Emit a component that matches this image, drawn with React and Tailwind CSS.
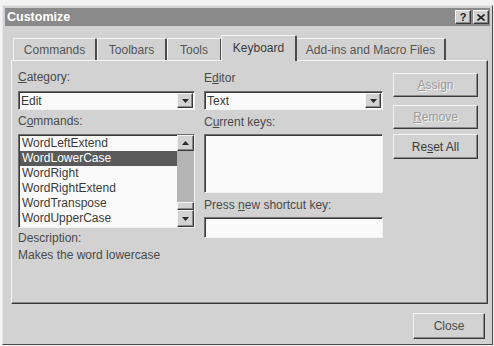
import React from 'react';

const font = "font-['Liberation_Sans',Arial,sans-serif]";

const sunken =
  'border border-t-[#6e6e6e] border-l-[#6e6e6e] border-r-[#f2f2f2] border-b-[#f2f2f2] shadow-[inset_1px_1px_0_#3a3a3a]';
const raised =
  'border border-t-[#f4f4f4] border-l-[#f4f4f4] border-r-[#3a3a3a] border-b-[#3a3a3a] shadow-[inset_-1px_-1px_0_#8a8a8a]';

const Arrow = ({ up }) => (
  <svg width="7" height="4" viewBox="0 0 7 4">
    <path d={up ? 'M0 4 L3.5 0 L7 4 Z' : 'M0 0 L7 0 L3.5 4 Z'} fill="#2a2a2a" />
  </svg>
);

const Combo = ({ value }) => (
  <div className={`h-[19px] bg-[#fafafa] flex items-center ${sunken}`}>
    <span className="flex-1 pl-[2px] text-[12px] leading-none text-[#3a3a3a]">{value}</span>
    <div className={`w-[16px] h-[15px] mr-[1px] bg-[#d2d2d2] flex items-center justify-center ${raised}`}>
      <Arrow />
    </div>
  </div>
);

const Label = ({ pre, u, post, className = '' }) => (
  <div className={`text-[12px] leading-[15px] text-[#4a4a4a] ${className}`}>
    {pre}
    <span className="underline">{u}</span>
    {post}
  </div>
);

const Button = ({ pre = '', u, post, disabled, className = '' }) => (
  <div
    className={`h-[24px] bg-[#d2d2d2] flex items-center justify-center text-[12px] ${raised} ${
      disabled ? 'text-[#9a9a9a] [text-shadow:1px_1px_0_#f4f4f4]' : 'text-[#3a3a3a]'
    } ${className}`}
  >
    {pre}
    <span className="underline">{u}</span>
    {post}
  </div>
);

const tabs = [
  { name: 'Commands', w: 'w-[84px]' },
  { name: 'Toolbars', w: 'w-[70px]' },
  { name: 'Tools', w: 'w-[55px]' },
  { name: 'Keyboard', w: 'w-[76px]', active: true },
  { name: 'Add-ins and Macro Files', w: 'w-[150px]' },
];

const commands = [
  'WordLeftExtend',
  'WordLowerCase',
  'WordRight',
  'WordRightExtend',
  'WordTranspose',
  'WordUpperCase',
];

export default function App() {
  return (
    <div className={`w-[494px] h-[346px] bg-[#f2f2f2] pt-[5px] pl-[2px] overflow-hidden ${font}`}>
      <div className="w-[491px] h-[340px] bg-[#d2d2d2] border border-t-[#e6e6e6] border-l-[#e6e6e6] border-r-[#4a4a4a] border-b-[#4a4a4a] px-[2px] pt-[2px] flex flex-col">
        {/* title bar */}
        <div className="h-[18px] bg-[#8a8a8a] flex items-center justify-between pl-[2px] pr-[1px]">
          <span className="text-[12.5px] font-bold text-white leading-none">Customize</span>
          <div className="flex gap-[2px]">
            <div className={`w-[16px] h-[14px] bg-[#d2d2d2] flex items-center justify-center text-[11px] font-bold text-[#222] leading-none ${raised}`}>
              ?
            </div>
            <div className={`w-[16px] h-[14px] bg-[#d2d2d2] flex items-center justify-center ${raised}`}>
              <svg width="8" height="7" viewBox="0 0 8 7">
                <path d="M0.5 0.5 L7.5 6.5 M7.5 0.5 L0.5 6.5" stroke="#222" strokeWidth="1.6" />
              </svg>
            </div>
          </div>
        </div>

        <div className="pl-[6px] pr-[2px]">
          {/* tabs */}
          <div className="h-[25px] mt-[9px] flex items-end pl-[2px]">
            {tabs.map((t) =>
              t.active ? (
                <div
                  key={t.name}
                  className={`${t.w} h-[26px] -mb-[1px] -mx-[1px] relative z-10 bg-[#d2d2d2] border-t border-l border-[#f4f4f4] border-r-2 border-r-[#4a4a4a] rounded-t-[2px] flex items-center justify-center pb-[2px] text-[12px] text-[#3a3a3a]`}
                >
                  {t.name}
                </div>
              ) : (
                <div
                  key={t.name}
                  className={`${t.w} h-[22px] bg-[#d2d2d2] border-t border-l border-[#f4f4f4] border-r-2 border-r-[#4a4a4a] rounded-t-[2px] flex items-center justify-center text-[12px] text-[#555]`}
                >
                  {t.name}
                </div>
              )
            )}
          </div>

          {/* panel */}
          <div className="w-[477px] h-[244px] border border-t-[#f4f4f4] border-l-[#f4f4f4] border-r-[#3a3a3a] border-b-[#3a3a3a] shadow-[inset_-1px_-1px_0_#8a8a8a] pl-[6px] flex gap-[9px]">
            {/* left column */}
            <div className="w-[177px] flex flex-col">
              <Label u="C" post="ategory:" className="mt-[9px]" />
              <div className="mt-[6px]">
                <Combo value="Edit" />
              </div>
              <Label pre="C" u="o" post="mmands:" className="mt-[4px]" />
              <div className={`mt-[5px] h-[94px] bg-[#fafafa] flex ${sunken}`}>
                <div className="flex-1 pt-[1px] pl-[1px]">
                  {commands.map((c) => (
                    <div
                      key={c}
                      className={`h-[15px] leading-[15px] pl-[2px] text-[12px] ${
                        c === 'WordLowerCase' ? 'bg-[#5a5a5a] text-white' : 'text-[#3a3a3a]'
                      }`}
                    >
                      {c}
                    </div>
                  ))}
                </div>
                <div className="w-[17px] flex flex-col">
                  <div className={`h-[16px] bg-[#d2d2d2] flex items-center justify-center ${raised}`}>
                    <Arrow up />
                  </div>
                  <div className="flex-1 bg-[#b4b4b4]" />
                  <div className={`h-[8px] bg-[#d2d2d2] ${raised}`} />
                  <div className={`h-[17px] bg-[#d2d2d2] flex items-center justify-center ${raised}`}>
                    <Arrow />
                  </div>
                </div>
              </div>
              <div className="mt-[3px] text-[12px] leading-[15px] text-[#4a4a4a]">Description:</div>
              <div className="mt-[2px] text-[12px] leading-[15px] text-[#4a4a4a]">Makes the word lowercase</div>
            </div>

            {/* middle column */}
            <div className="w-[179px] flex flex-col">
              <Label pre="E" u="d" post="itor" className="mt-[10px]" />
              <div className="mt-[5px]">
                <Combo value="Text" />
              </div>
              <Label pre="C" u="u" post="rrent keys:" className="mt-[5px]" />
              <div className={`mt-[4px] h-[59px] bg-[#fafafa] ${sunken}`} />
              <Label pre="Press " u="n" post="ew shortcut key:" className="mt-[5px]" />
              <div className={`mt-[4px] h-[21px] bg-[#fafafa] ${sunken}`} />
            </div>

            {/* right column */}
            <div className="w-[85px] ml-[1px] flex flex-col">
              <Button u="A" post="ssign" disabled className="mt-[12px]" />
              <Button u="R" post="emove" disabled className="mt-[8px]" />
              <Button pre="Re" u="s" post="et All" className="mt-[5px] h-[25px]" />
            </div>
          </div>

          {/* bottom */}
          <div className="flex justify-end pr-[3px] mt-[9px]">
            <div className={`w-[72px] h-[26px] bg-[#d2d2d2] flex items-center justify-center text-[12px] text-[#4a4a4a] ${raised}`}>
              Close
            </div>
          </div>
        </div>
      </div>
    </div>
  );
}
